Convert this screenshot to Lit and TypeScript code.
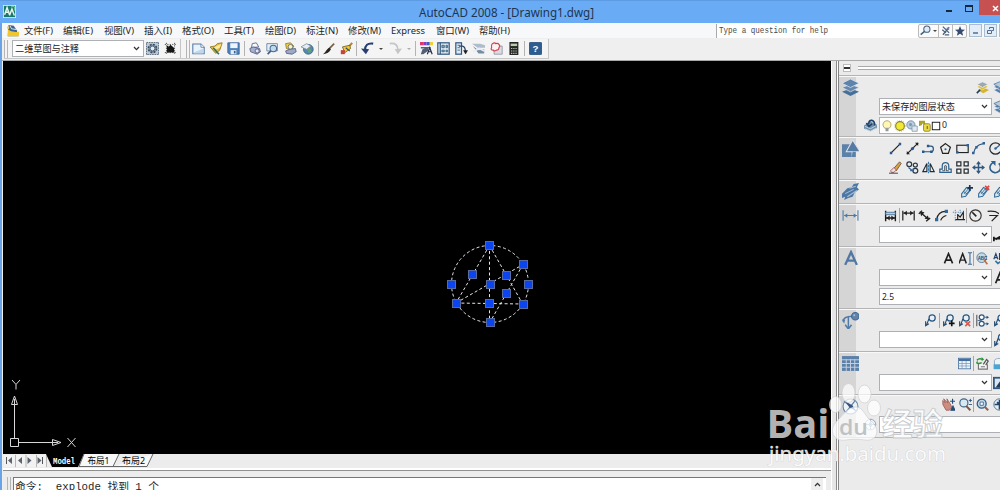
import { LitElement, html, css, svg, nothing } from "lit";
import { customElement, property } from "lit/decorators.js";

const glyphs: Record<string, unknown> = {
  app: svg`<rect width="16" height="16" fill="#e9f5f0"/><rect x="1" y="1" width="14" height="14" fill="#19796b"/><path d="M2 12L5 3l3 9M3 9h5M8 13l3-8 3 8" fill="none" stroke="#e8f6ee" stroke-width="1.8"/><path d="M10 2h4v5" fill="none" stroke="#7ed6a3"/>`,
  dwg: svg`<path d="M2 0l7 1 4 6 2 8H1z" fill="#3b6391"/><path d="M1 6q5 4 15 3v6H1z" fill="#f0c62e"/><path d="M0 2h3v3H0z" fill="#f3d24e"/><path d="M4 1l2 4 6 1" stroke="#e8ecf0" fill="none" stroke-width="1.2"/>`,
  gear: svg`<rect x=".5" y=".5" width="15" height="15" fill="#b9c7d4" stroke="#3d5268" stroke-dasharray="2 1"/><circle cx="8" cy="8" r="5" fill="#8fa5b8" stroke="#34495e" stroke-width="2" stroke-dasharray="2.4 1.5"/><circle cx="8" cy="8" r="3" fill="#e2eaf0" stroke="#34495e"/>`,
  home: svg`<path d="M1 3h14M1 13h14M3 1v14M13 1v14" stroke="#555" stroke-width="1.200" stroke-dasharray="1.500 1.500"/><path d="M3.500 8V4.500h2V6L8 3.500l4.500 4V13h-9z" fill="#161616"/>`,
  newf: svg`<path d="M1 2.5h10l4 4v8H1z" fill="#e9f3fc" stroke="#5679a4" stroke-width="1.3"/><path d="M11 2.5v4h4" fill="#fff" stroke="#5679a4"/><path d="M2 13l12-5v6H2z" fill="#bfd6ec"/>`,
  open: svg`<path d="M0 6l6-1 3-3 6-1-3 9-5 4z" fill="#e5bb3c" stroke="#8f7019"/><path d="M4 7l10-5-2 5-4 2z" fill="#fae99e"/><path d="M4 7l5 6 2 2" stroke="#386f5c" stroke-width="2"/>`,
  save: svg`<path d="M1 1h14v14H3l-2-2z" fill="#4f81ba" stroke="#355f94"/><rect x="4" y="1.5" width="9" height="6" fill="#eef4fb"/><rect x="4.5" y="10" width="7" height="5" fill="#e6edf5"/><rect x="8.5" y="11" width="2" height="3" fill="#355f94"/>`,
  print: svg`<path d="M3 7l1-5 5-1 3 5z" fill="#f7f9fc" stroke="#4c5a82"/><path d="M1 8l4-2 8 2 1 4-4 3-8-3z" fill="#a5b0cc" stroke="#4c5a82"/><circle cx="10" cy="11" r="2.5" fill="#e5e8f2" stroke="#4c5a82"/>`,
  preview: svg`<path d="M1 2h13v9H1z" fill="#e5eff8" stroke="#607c9d"/><circle cx="9" cy="8" r="4" fill="#bddbed" stroke="#49688d" stroke-width="1.3"/><path d="M6 11l-4 4" stroke="#3f5b80" stroke-width="2"/>`,
  publish: svg`<path d="M2 2l6-1 4 4-3 5-6-2z" fill="#f2d04d" stroke="#8d7321"/><circle cx="8" cy="6" r="3" fill="#fff2b7" stroke="#4f628c"/><path d="M2 11l5-2 7-1 1 4-5 3-7-1z" fill="#9da9c5" stroke="#4c5a82"/>`,
  globe: svg`<circle cx="9" cy="9" r="6" fill="#5488ac" stroke="#31617f"/><path d="M6 6l5 1 2 4-3 3-2-4z" fill="#63a074"/><path d="M0 6l7-4 5 3-5 4z" fill="#e8ecf2" stroke="#8191a7"/>`,
  brush: svg`<path d="M15 2L8 9" stroke="#795c44" stroke-width="2"/><path d="M9 7l2 2c-2 4-6 6-10 6 3-1 4-6 8-8z" fill="#282522"/>`,
  match: svg`<path d="M15 1L8 9" stroke="#af8240" stroke-width="2.5"/><path d="M3 6l9-2 1 4-7 5z" fill="#f2cb2e" stroke="#6b571f"/><path d="M1 10h5v5H1z" fill="#c54435"/><path d="M7 7l5 4" stroke="#30537b" stroke-width="1.5"/>`,
  undo: svg`<path d="M15 2C8 1 5 4 5 10" fill="none" stroke="#253f70" stroke-width="2.6"/><path d="M0 8l10 1-4 6z" fill="#253f70"/>`,
  redo: svg`<path d="M1 2c7-1 10 2 10 8" fill="none" stroke="#c4c6ca" stroke-width="2.2"/><path d="M7 9l9-1-5 7z" fill="#c4c6ca"/>`,
  props: svg`<path d="M0 0h4v4H0z" fill="#dc386a"/><path d="M4 0h4v4H4z" fill="#8b36c4"/><path d="M8 0h4v4H8z" fill="#3c58ce"/><path d="M12 0h4v4h-4z" fill="#ead339"/><path d="M1 6h12v2H1zM3 9l6-2 2 3-7 5H1z" fill="#506079"/><path d="M9 15l3-8 3 8M10 12h4" stroke="#222c46" fill="none" stroke-width="1.4"/>`,
  dc: svg`<rect x="1" y="1" width="14" height="14" fill="#e1edf4" stroke="#31577e" stroke-width="1.5"/><path d="M4 1v14" stroke="#31577e" stroke-width="1.500"/><path d="M6 4h3v3H6zM11 4h2v3h-2zM6 10h3v2H6zM11 10h2v2h-2z" fill="#83a8ba" stroke="#37617d"/>`,
  tool: svg`<rect x="1" y="1" width="7" height="14" fill="#dceaf4" stroke="#31577e" stroke-width="1.5"/><path d="M3 4h3M3 7h3M3 10h3" stroke="#31577e"/><path d="M5 5h4c3 0 4 3 4 9" stroke="#27466b" stroke-width="1.6" fill="none"/><path d="M10 10h6l-3 5z" fill="#222"/>`,
  sheet: svg`<path d="M0 2h10l6 2v3H7z" fill="#aebccb"/><path d="M1 5l7 5 7-1v5H8z" fill="#748da5"/><path d="M1 12l8-4 6 3" fill="none" stroke="#e7edf2" stroke-width="2"/>`,
  markup: svg`<path d="M5 5h10v10H5z" fill="#dbdce1" stroke="#8e929c"/><path d="M3 2q3-2 4 0 3-1 4 1 2 2 0 4 0 3-3 3-3 2-4 0-4 0-2-3-1-3 1-5z" fill="#fbf2f3" stroke="#d83c50" stroke-width="1.4"/>`,
  calc: svg`<rect x="3" y="0" width="11" height="16" fill="#252825"/><rect x="4.5" y="2" width="8" height="3" fill="#b9cdaa"/><path d="M5 8h7M5 11h7M5 14h7" stroke="#c4c7be" stroke-width="1.3" stroke-dasharray="1.5 1.2"/>`,
  help: svg`<rect x=".5" y=".5" width="15" height="15" rx="1" fill="#2c5d91" stroke="#1f4875"/><text x="8" y="12.500" text-anchor="middle" font-family="Liberation Sans" font-weight="bold" font-size="12" fill="#fff">?</text>`,
  search: svg`<circle cx="10" cy="6" r="4.5" fill="#e0ebf5" stroke="#426183" stroke-width="1.5"/><path d="M7 9l-6 5" stroke="#426183" stroke-width="2.2"/>`,
  sat: svg`<path d="M3 1l10 10M13 2L3 14M2 6l6 5M6 14h7" stroke="#4b5f7f" stroke-width="2"/><path d="M8 3l5-1v5z" fill="#6f839f"/>`,
  star: svg`<path d="M8 0l2.2 5.5 5.8.4-4.5 3.7L13 15.5 8 12.300l-5 3.200 1.500-5.900L0 5.900l5.800-.4z" fill="#354b70"/>`,
  layers: svg`<path d="M0 12l8-3 8 3-8 4z" fill="#486f97"/><path d="M0 8l8-3 8 3-8 4z" fill="#6588ac" stroke="#e1e4e8" stroke-width=".7"/><path d="M0 4l8-4 8 4-8 4z" fill="#5e84ad" stroke="#e1e4e8" stroke-width=".7"/>`,
  layY: svg`<path d="M2 11l7-3 7 3-7 4z" fill="#d4b330"/><path d="M1 7l7-3 7 3-7 4z" fill="#dfbd38" stroke="#fff" stroke-width=".5"/><path d="M1 4l7-3 7 3-7 4z" fill="#9ba9aa" stroke="#eef"/><path d="M1 15l4-4" stroke="#223e60" stroke-width="2"/>`,
  layB: svg`<path d="M1 11l7-3 7 3-7 4zM1 7l7-3 7 3-7 4z" fill="#527fa8" stroke="#eef" stroke-width=".7"/><path d="M1 4l7-3 7 3-7 4z" fill="#bacbd5" stroke="#527fa8"/>`,
  layP: svg`<path d="M0 8l8-5 8 4v4l-8 4-8-3z" fill="#6f91ad"/><path d="M1 12l7 3 7-4M1 9l7 3 7-4" fill="none" stroke="#d4dfe7"/><path d="M13 8c1-8-8-8-7-2M3 5l3 4 4-3" stroke="#223f65" fill="none" stroke-width="2"/>`,
  bulb: svg`<path d="M5 11C0 6 4 1 8 1s8 5 3 10z" fill="#fff7b8" stroke="#a38b42"/><path d="M6 11h4v4H6z" fill="#8a98a8"/>`,
  sun: svg`<circle cx="8" cy="8" r="5.800" fill="#f1e932" stroke="#88832a" stroke-width="1.500"/><circle cx="8" cy="8" r="7.500" fill="none" stroke="#b7a642" stroke-dasharray="1 2"/>`,
  vp: svg`<circle cx="6.500" cy="6.500" r="5.500" fill="#b9cddc" stroke="#5f7f99"/><circle cx="6" cy="6" r="2" fill="#7896b0"/><path d="M8 8h7v7H8z" fill="#e2e9ee" stroke="#7c93a7"/>`,
  lock: svg`<path d="M1 8V2h6v5M3 7V4h3" fill="none" stroke="#aba12e" stroke-width="2"/><rect x="6" y="5" width="9" height="10" rx="2" fill="#ead844" stroke="#7c741f"/><path d="M11 8v4" stroke="#746d20" stroke-width="1.500"/>`,
  box: svg`<rect x="2" y="2" width="12" height="12" fill="#fff" stroke="#151515" stroke-width="1.500"/>`,
  shapes: svg`<path d="M0 4h9v12H0z" fill="#5b81a9"/><path d="M10 0l7 11H4z" fill="#557ba4" stroke="#dfe2e6"/><path d="M10 11h3v5H9z" fill="#5b81a9"/>`,
  line: svg`<path d="M2 14L14 2" stroke="#222" stroke-width="1.500"/><path d="M1 12h3v3H1zM12 1h3v3h-3z" fill="#28588f"/>`,
  xline: svg`<path d="M1 15L15 1" stroke="#222" stroke-width="1.500"/><path d="M11 1h4v4zM1 11v4h4z" fill="#222"/><circle cx="8" cy="8" r="2" fill="#28588f"/>`,
  pline: svg`<path d="M2 12h9c4 0 4-7 0-7H8" fill="none" stroke="#2b5481" stroke-width="1.500"/><path d="M0 10.500h3v3H0zM6 3.500h3v3H6zM10 10.500h3v3h-3z" fill="#26588e"/>`,
  poly: svg`<path d="M8 2l6 4.500-2.500 7.500h-7L2 6.500z" fill="none" stroke="#222" stroke-width="1.500"/><circle cx="8" cy="9" r="1.300" fill="#2f6398"/>`,
  rect: svg`<rect x="1" y="4" width="14" height="9" fill="none" stroke="#222" stroke-width="1.400"/><path d="M0 11h3v3H0zM13 2.500h3v3h-3z" fill="#2f6398"/>`,
  arc: svg`<path d="M2 14C3 6 8 3 14 2" fill="none" stroke="#315a86" stroke-width="1.500"/><path d="M0 12h3v3H0zM4 5h3v3H4zM13 0h3v3h-3z" fill="#2f6398"/>`,
  circ: svg`<circle cx="8" cy="8" r="7" fill="none" stroke="#252d35" stroke-width="1.500"/><path d="M8 8l5-4" stroke="#2f6398" stroke-width="1.500"/><circle cx="8" cy="8" r="1.500" fill="#2f6398"/>`,
  erase: svg`<path d="M6 9l7-8 2 2-6 9z" fill="#d7a24b" stroke="#6b4e2e"/><path d="M2 12l4-4 3 3-3 3H3z" fill="#f0dcdc" stroke="#a04a50"/><path d="M0 15h11" stroke="#222"/>`,
  copy: svg`<circle cx="4" cy="4" r="3" fill="none" stroke="#2c3947" stroke-width="1.500"/><circle cx="11.500" cy="5" r="2.500" fill="none" stroke="#2c3947" stroke-width="1.500"/><circle cx="11.500" cy="12" r="3" fill="none" stroke="#2c3947" stroke-width="1.500"/><path d="M3 8l5 4M5 12h4V9" fill="none" stroke="#316494" stroke-width="1.500"/>`,
  mirror: svg`<path d="M8 1v14" stroke="#317ab0" stroke-width="1.300" stroke-dasharray="3 1"/><path d="M6 3v10H1zM10 3v10h5z" fill="none" stroke="#202c38" stroke-width="1.400"/>`,
  offset: svg`<path d="M1 14h14v-4h-3V6a4 4 0 0 0-8 0v4H1z" fill="none" stroke="#2b6390" stroke-width="1.500"/><path d="M4 12h3V6a1.500 1.500 0 0 1 2 0v6h3" fill="none" stroke="#273746"/>`,
  array: svg`<path d="M1 1h5v5H1zM10 1h5v5h-5zM1 10h5v5H1zM10 10h5v5h-5z" fill="#f5f5f5" stroke="#252b31" stroke-width="1.500"/>`,
  move: svg`<path d="M8 2v12M2 8h12" stroke="#31577e" stroke-width="1.800"/><path d="M8 0l3 4H5zM8 16l3-4H5zM0 8l4-3v6zM16 8l-4-3v6z" fill="#31577e"/>`,
  rotate: svg`<path d="M5 2a6.500 6.500 0 1 0 7 1" fill="none" stroke="#31608f" stroke-width="2"/><path d="M2 0h6v6z" fill="#31608f"/>`,
  ann: svg`<path d="M0 10l5-5 4-1 2-3 5-1-2 4 2 2-4 3-2 4-4 1-4 2 1-3-3 1z" fill="#4d77a4"/><path d="M3 10l8-4M5 13l9-6M7 5l6-2" stroke="#a9bfd4"/>`,
  ed: svg`<path d="M2 11L8 3l5 3-6 8-5 1z" fill="#d6e4ed" stroke="#326b98" stroke-width="1.300"/><path d="M5 11l5-6M7 12l5-6M4 8l5 3" stroke="#326b98"/>`,
  dim: svg`<path d="M1 3v10M15 3v10M2 8h12" stroke="#507aa4" fill="none"/><path d="M2 8l3-2v4zM14 8l-3-2v4z" fill="#507aa4"/>`,
  dimq: svg`<path d="M2 2v13M14 2v13M2 11h12" stroke="#1c1c1c" stroke-width="1.700"/><path d="M2 4h12v3H2z" fill="#b8cce0" stroke="#3c6793"/><path d="M3 11l4-3v6zM13 11l-4-3v6z" fill="#222"/>`,
  diml: svg`<path d="M1 2v12M15 2v12M2 5h12" stroke="#222" stroke-width="1.500"/><path d="M2 5l4-3v6zM14 5l-4-3v6z" fill="#222"/>`,
  dima: svg`<path d="M1 6l4-4M10 15l5-4M4 5l8 7" stroke="#222" stroke-width="1.700"/><path d="M2 3l6 1-4 5zM14 13l-6-1 4-4z" fill="#222"/>`,
  dimarc: svg`<path d="M2 13C3 7 7 3 13 3M7 14c1-3 3-5 7-6" fill="none" stroke="#222" stroke-width="1.500"/><path d="M0 11h4v4H0zM12 1h4v4h-4z" fill="#336998"/>`,
  dimo: svg`<path d="M4 13h12M7 6v7M7 7l3 3 4-6v9" stroke="#222" fill="none" stroke-width="1.400"/><path d="M1 4h13M4 1v14M10 1v5" stroke="#4179a4" stroke-dasharray="1.500 1.500"/>`,
  dimr: svg`<circle cx="8" cy="8" r="7" fill="none" stroke="#343434" stroke-width="1.400"/><path d="M9 9L4 4" stroke="#222" stroke-width="2"/>`,
  jog: svg`<path d="M2 3c8-1 11 0 14 3M4 8h10L7 15" stroke="#222" fill="none" stroke-width="1.500"/>`,
  update: svg`<path d="M1 10v5M2 12h10M3 13l10-6" stroke="#181818" stroke-width="2"/>`,
  A: svg`<path d="M3 14L8 2l5 12M5 10h6" fill="none" stroke="#202020" stroke-width="2"/>`,
  bigA: svg`<path d="M3 14L8.500 2 14 14M5 10h7" fill="none" stroke="#5178a2" stroke-width="2.200"/>`,
  AI: svg`<path d="M0 14L4.500 2 9 14M2 10h5" fill="none" stroke="#202020" stroke-width="1.800"/><path d="M11 1h5M11 15h5M13.500 1v14" stroke="#396996" stroke-width="1.300"/>`,
  find: svg`<circle cx="7" cy="7" r="6" fill="#c2d8e7" stroke="#4b7396"/><path d="M10 10l4 5" stroke="#bd7145" stroke-width="2"/><text x="2" y="9.500" font-size="6" textLength="12" lengthAdjust="spacingAndGlyphs" font-weight="bold" font-family="Liberation Sans" fill="#274f79">ABC</text>`,
  spell: svg`<path d="M1 9l2.500-7L6 9M2 7h3M8 2v7h3q2-2 0-4 1-3-1-3z" fill="none" stroke="#20446b" stroke-width="1.400"/><path d="M3 11l3 3 8-5" stroke="#3474a6" fill="none" stroke-width="2"/>`,
  leadBig: svg`<path d="M1 9C1 5 5 4 10 4M6 5v10M3 12l3 4 3-4" fill="none" stroke="#517ba7" stroke-width="1.400"/><path d="M0 7h3l-1 4z" fill="#517ba7"/><circle cx="12.500" cy="4" r="3.500" fill="#6284a9" stroke="#426892"/><circle cx="11.500" cy="3" r="1" fill="#a5bdd5"/>`,
  lead: svg`<circle cx="10" cy="5" r="3.800" fill="#e8eff5" stroke="#285783" stroke-width="1.500"/><path d="M6 6L3 14M2 9v5.500l4-2.500" fill="none" stroke="#254d73" stroke-width="1.400"/>`,
  leadm: svg`<path d="M1 1v14" stroke="#222"/><path d="M2 8h5M10 4h4M10 12h4" stroke="#315d87"/><circle cx="7" cy="4" r="3" fill="#fff" stroke="#2e5880" stroke-width="1.500"/><circle cx="7" cy="12" r="3" fill="#fff" stroke="#2e5880" stroke-width="1.500"/><path d="M13 2l3 2-3 2zM13 10l3 2-3 2z" fill="#244d75"/>`,
  table: svg`<rect x=".5" y="1.500" width="15" height="13" fill="#f1f6fb" stroke="#456f9e"/><path d="M1 2h14v3H1z" fill="#456f9e"/><path d="M1 8h14M1 11h14M5 5v10M10 5v10" stroke="#7d9fc3"/>`,
  tbig: svg`<rect y="1" width="16" height="14" fill="#5b81aa"/><path d="M0 4.500h16M0 8h16M0 11.500h16M4 4v11M8 4v11M12 4v11" stroke="#c7d2df" stroke-width=".9"/>`,
  link: svg`<path d="M3 8v7h11V9M6 12h5" fill="#f4f4f4" stroke="#757575" stroke-width="1.400"/><path d="M1 4q3-3 7-1M7 7q-4 2-6 0" stroke="#2b9438" stroke-width="1.700" fill="none"/><path d="M7 0v5l3-2zM2 4v5l-2-2z" fill="#2b9438"/><path d="M9 9l4-6 2 2-3 5" fill="none" stroke="#555" stroke-width="1.500"/>`,
  db: svg`<path d="M3 4c2-3 9-3 12 0v10H3z" fill="#edf3f7" stroke="#8aa1b4"/><path d="M2 9h14v6H2z" fill="#4ba4d2"/>`,
  style: svg`<rect x="1" y="2" width="16" height="12" fill="#d7e6f1" stroke="#31577e" stroke-width="2"/><path d="M3 13l5-7 5 7z" fill="#243b58"/>`,
  nav: svg`<circle cx="8" cy="8" r="7" fill="#edf2f7" stroke="#6484a6"/><path d="M2 3l11 9M12 3l-8 10" stroke="#6582a2" stroke-width="1.200"/><path d="M3 3l7 4 2 4-5-2z" fill="#36567d"/>`,
  pan: svg`<path d="M1 3l3 3-2-5 5 5-1-5 4 6 2 4-3 4H5L1 8z" fill="#ce8b80" stroke="#985e58"/><path d="M13 1v6M10 4h6M11 15l2.500-5 2.500 5z" stroke="#244c78" stroke-width="1.400" fill="#244c78"/>`,
  zoom: svg`<circle cx="6" cy="6" r="5" fill="#d5e8f3" stroke="#3e6584" stroke-width="1.400"/><path d="M9 10l5 5" stroke="#7b5545" stroke-width="2.500"/><path d="M12 3h4M14 1v4M12 8h4" stroke="#1e4a77"/>`,
  zwin: svg`<circle cx="7" cy="7" r="5.500" fill="#c3d9e8" stroke="#315d83" stroke-width="1.600"/><path d="M5 5h4v4H5z" fill="#fff" stroke="#345d82"/><path d="M11 11l4 4" stroke="#a35b4b" stroke-width="2.500"/>`,
  orbit: svg`<circle cx="8" cy="8" r="7" fill="#e3edf4" stroke="#436786"/><path d="M8 2v12M2 8h12M5 5l6 6" stroke="#20466c" stroke-width="2"/>`,
  compass: svg`<circle cx="8" cy="8" r="6.500" fill="#edf2f6" stroke="#7d97ae"/><path d="M8 2v12M2 8h12M8 5l2 3-2 3-2-3z" stroke="#7d97ae" fill="none"/>`,
};
glyphs.edp = svg`${glyphs.ed}<path d="M12 0v7M9 3.500h7" stroke="#173355" stroke-width="2"/>`;
glyphs.edx = svg`${glyphs.ed}<path d="M10 1l5 5M15 1l-5 5" stroke="#d74443" stroke-width="2"/>`;
glyphs.leadp = svg`${glyphs.lead}<path d="M12 8v7M8.500 11.500h7" stroke="#111" stroke-width="2"/>`;
glyphs.leadx = svg`${glyphs.lead}<path d="M9 9l6 6M15 9l-6 6" stroke="#d85b50" stroke-width="2"/>`;

const icon = (name: string, size = 13) =>
  html`<svg class="icon" width=${size} height=${size} viewBox="0 0 16 16">${glyphs[name]}</svg>`;

/* A run of text set to an exact measure. */
const label = (text: string, width: number, size: number, cls = "") => {
  const h = Math.ceil(size * 1.5);
  return html`<svg class="label ${cls}" width=${width} height=${h}><text x="0" y=${h * 0.73} font-size=${size} textLength=${width} lengthAdjust="spacingAndGlyphs">${text}</text></svg>`;
};

const chevron = () => html`<svg class="chev" width="7" height="5" viewBox="0 0 7 5"><path d="M1 1l2.500 2.600L6 1" fill="none" stroke="#333" stroke-width="1.300"/></svg>`;

@customElement("cad-combo")
class CadCombo extends LitElement {
  @property() text = "";
  @property({ type: Number }) measure = 0;
  @property({ type: Boolean }) open = false;
  static styles = css`
    :host { display: block; box-sizing: border-box; height: 17px; background: #fff; border: 1px solid #adb1b5; font-family: "Noto Sans", "Noto Sans CJK SC", sans-serif; }
    .in { height: 100%; display: flex; align-items: center; padding: 0 3px 0 2px; }
    svg { flex: none; }
    .label { overflow: visible; fill: #222; }
    .chev { margin-left: auto; }
  `;
  render() {
    return html`<div class="in">${this.text ? label(this.text, this.measure, 9.6) : nothing}<slot></slot>${this.open ? nothing : chevron()}</div>`;
  }
}

@customElement("cad-drawing")
class CadDrawing extends LitElement {
  static styles = css`
    :host { display: block; background: #000; overflow: hidden; }
    svg { display: block; }
    .dash { fill: none; stroke: #e6e6e6; stroke-width: 1; stroke-dasharray: 3 2.400; }
    .ucs { fill: none; stroke: #d8d8d8; stroke-width: 1; }
    .grip { fill: #0c45f0; stroke: #576b9d; }
  `;
  render() {
    const grips = [[489.500, 245.500], [523.500, 264.500], [472.500, 274.500], [506.500, 275.500], [451.500, 284.500], [490.500, 284.500], [528.500, 284.500], [506.500, 293.500], [456.500, 303.500], [489.500, 303.500], [523.500, 304.500], [490.500, 322.500]];
    return html`<svg width="828" height="394" viewBox="3 61 828 394">
      <g class="dash">
        <circle cx="490" cy="284" r="38.500"/>
        <path d="M489.500 245.500V322M489.500 245.500L456 303M489.500 245.500L523 304.500M456 303L523 304M456 303L523 264.500M523 264.500L490 322"/>
      </g>
      ${grips.map(([x, y]) => svg`<rect class="grip" x=${x - 4} y=${y - 4} width="8" height="8"/>`)}
      <g class="ucs">
        <path d="M10.500 438.500h8v8h-8zM14.500 438V405M18.500 442.500H53M11.500 404.500h6L14.500 396zM52.500 439.500v6L61 442.500zM14.500 404v-5M53 442.500h5M12 380l4 4.500 4-4.500M16 384.500v5M67.500 438l8 9M75.500 438l-8 9"/>
      </g>
    </svg>`;
  }
}

type Item = string | { name: string; size: number };

@customElement("app-root")
class AppRoot extends LitElement {
  static styles = css`
    :host { display: block; position: relative; width: 1000px; height: 490px; overflow: hidden; background: #efefef; font-family: "Noto Sans", "Noto Sans CJK SC", sans-serif; color: #222; }
    * { box-sizing: border-box; }
    svg { display: block; flex: none; }
    .label { overflow: visible; fill: #1f1f1f; }
    .title { height: 23px; background: #6aabf5; border-top: 1px solid #5c9be2; display: flex; align-items: flex-start; padding-left: 3px; }
    .title .icon { margin-top: 4px; }
    .title .name { margin: 3px 0 0 403px; }
    .title .name .label { fill: #1d3550; }
    .winbtn { display: flex; margin-left: auto; }
    .min { width: 6px; height: 2px; background: #16283c; margin: 9px 13px 0 0; }
    .max { width: 8px; height: 7px; border: 1px solid #16283c; border-top-width: 2px; margin: 4px 6px 0 0; }
    .close { width: 21px; height: 15px; background: #c75050; margin-top: -1px; padding: 5px 0 0 13px; }
    .frame { display: flex; height: 467px; }
    .edge { width: 2px; background: #6aa4e6; flex: none; }
    .inner { width: 998px; flex: none; }
    .menubar { height: 15px; display: flex; align-items: center; background: #f7f8f9; padding-left: 5px; overflow: hidden; }
    .menubar > * { flex: none; }
    .menu { display: flex; align-items: center; width: 486px; margin-left: 5px; justify-content: space-between; }
    .ask { margin-left: 206px; width: 202px; height: 14px; border-left: 1px solid #aaa; background: #fff; display: flex; align-items: center; padding-left: 2px; }
    .mono { font-family: "Liberation Mono", "Noto Sans CJK SC", monospace; }
    .ask .label { fill: #4a4a4a; }
    .helpset { display: flex; align-items: center; height: 14px; width: 49px; border: 1px solid #bbb; border-radius: 2px; padding: 0 1px; background: #fafafa; justify-content: space-between; }
    .tri { border: 2px solid transparent; border-top: 2px solid #444; border-bottom: 0; flex: none; }
    .helpset i { width: 1px; height: 12px; background: #bbb; flex: none; }
    .mdi { width: 13px; height: 13px; border: 1px solid #a9bdcf; background: #e2edf8; margin-left: 2px; display: flex; justify-content: center; align-items: center; }
    .toolbar { height: 23px; display: flex; align-items: center; border-bottom: 1px solid #a9a9a9; width: 998px; padding-left: 2px; }
    .bar { height: 20px; display: flex; align-items: center; border-right: 1px solid #c5c5c5; border-bottom: 1px solid #c8c8c8; background: #f4f4f4; }
    .first { width: 177px; }
    .second { width: 368px; padding-left: 5px; }
    .grip { width: 4px; height: 18px; border: solid #b5b5b5; border-width: 0 1px; flex: none; }
    .first cad-combo { width: 132px; margin: 0 0 0 4px; flex: none; }
    .cell { width: 17.500px; display: flex; justify-content: center; flex: none; }
    .bsep { width: 1px; height: 15px; background: #b4b4b4; margin: 0 1.400px; flex: none; }
    .second .dd { width: 10px; display: flex; justify-content: center; flex: none; }
    .pale { opacity: .4; }
    .main { display: flex; height: 429px; }
    .left { width: 829px; padding-left: 1px; flex: none; }
    cad-drawing { height: 393px; width: 828px; }
    .tabs { height: 16px; display: flex; background: #ececec; border-bottom: 2px solid #fff; }
    .cmdframe { height: 20px; border-top: 1px solid #8f8f8f; background: #ececec; padding: 6px 5px 0 4px; display: flex; gap: 2px; }
    .cmd { flex: 1; height: 16px; border: 1px solid #777; border-right: 0; background: #fff; display: flex; align-items: flex-start; padding: 0 3px 0 1px; }
    .up { width: 12px; height: 13px; margin-left: auto; background: #eee; display: flex; align-items: center; justify-content: center; }
    .split { width: 8px; flex: none; border: solid #858585; border-width: 0 1px 0 0; background: linear-gradient(90deg, #fff 0 1px, #e6e6e6 1px 5px, #8b8b8b 5px 6px, #fff 6px); }
    .dash { width: 161px; flex: none; background: #ebebeb; }
    .dhead { height: 14px; display: flex; align-items: center; padding-left: 4px; gap: 7px; }
    .collapse { width: 8px; height: 8px; border: 1px solid #bbb; display: flex; align-items: center; background: #fff; }
    .collapse i { display: block; height: 2px; width: 6px; background: #333; }
    .hline { width: 142px; height: 4px; border: solid #aaa; border-width: 1px 0; background: #fff; }
    .panel { display: flex; border-top: 1px solid #b4b4b4; box-shadow: inset 0 1px #f8f8f8; }
    .stripe { width: 17px; margin-top: 1px; background: #d5d5d5; padding: 2px 0 0 3px; flex: none; }
    .body { flex: 1; min-width: 0; }
    .row { display: flex; align-items: center; height: 19px; }
    .row .cell { width: 16.700px; }
    .sep { width: 1px; height: 15px; background: #a5a5a5; flex: none; }
    .field { display: flex; align-items: center; height: 17px; gap: 1px; padding-left: 23px; margin-top: 1px; }
    .field cad-combo { width: 113px; flex: none; }
    .field.lead { padding-left: 8px; gap: 2px; }
    .field cad-combo.wide { width: 126px; }
    .swatches { display: flex; align-items: center; gap: .5px; margin-left: -1px; }
    .h0 { height: 61px; } .h1 { height: 43px; } .h2 { height: 24px; } .h3 { height: 43px; } .h4 { height: 62px; } .h5 { height: 43px; } .h6 { height: 43px; } .h7 { height: 43px; }
    .h1 .row { padding-left: 31px; } .h1 .row:first-child { margin-top: 2px; }
    .gap { margin-top: 2px; }
    .end { border-top: 1px solid #b4b4b4; }
    .mark { position: absolute; left: 760px; top: 375px; pointer-events: none; }
  `;

  private menus: [string, number][] = [["文件(F)", 29], ["编辑(E)", 30], ["视图(V)", 30], ["插入(I)", 28], ["格式(O)", 32], ["工具(T)", 30], ["绘图(D)", 31], ["标注(N)", 32], ["修改(M)", 33], ["Express", 34], ["窗口(W)", 33], ["帮助(H)", 31]];

  private cell(item: Item) {
    if (item === "|") return html`<span class="sep"></span>`;
    return typeof item === "string" ? html`<span class="cell">${icon(item, 13)}</span>` : html`<span class="cell">${icon(item.name, item.size)}</span>`;
  }

  private tool(name: string) {
    if (name === "|") return html`<span class="bsep"></span>`;
    if (name === "v") return html`<span class="dd"><span class="tri"></span></span>`;
    if (name === "w") return html`<span class="dd pale"><span class="tri"></span></span>`;
    return html`<span class="cell">${icon(name)}</span>`;
  }

  private row(start: number, items: Item[]) {
    return html`<div class="row"><svg width=${start} height="1"></svg>${items.map((i) => this.cell(i))}</div>`;
  }

  private panel(cls: string, name: string, body: unknown) {
    return html`<section class="panel ${cls}"><div class="stripe">${icon(name, 17)}</div><div class="body">${body}</div></section>`;
  }

  private field(side: string) {
    return html`<div class="field"><cad-combo></cad-combo>${icon(side, 14)}</div>`;
  }

  private tabs() {
    return html`<svg width="170" height="14" viewBox="3 454 170 14">
      <path d="M4 455h43v12H4z" fill="#f2f2f2"/>
      <path d="M15.500 455v12M26 455v12M36.500 455v12M46.500 455v12" stroke="#b7b7b7"/>
      <path d="M6.500 457v7M42.500 457v7" stroke="#555"/>
      <path d="M12 457v7l-4-3.500zM22 457v7l-4-3.500zM27.500 457v7l4-3.500zM37.500 457v7l4-3.500z" fill="#5c6470"/>
      <path d="M46 454h38l-6 13H52z" fill="#000"/>
      <path d="M84 454l-5 12.500h34l6-12.500M113 466.500h34l6-12.500" fill="#f8f8f8" stroke="#666"/>
      <text x="53" y="464" textLength="22" lengthAdjust="spacingAndGlyphs" font-size="8.500" font-weight="bold" font-family="Liberation Mono" fill="#fff">Model</text>
      <text x="87.500" y="464.300" textLength="22" lengthAdjust="spacingAndGlyphs" font-size="9.500">布局1</text>
      <text x="122" y="464.300" textLength="23" lengthAdjust="spacingAndGlyphs" font-size="9.500">布局2</text>
    </svg>`;
  }

  private watermark() {
    return html`<svg class="mark" width="195" height="95" viewBox="760 375 195 95">
      <g fill="#fff" fill-opacity=".72" stroke="#c9cdd1" stroke-opacity=".8" stroke-width=".8">
        <ellipse cx="848.500" cy="393" rx="6.500" ry="9.500"/><ellipse cx="864.500" cy="394" rx="6.500" ry="9"/>
        <ellipse cx="835.500" cy="404.500" rx="6" ry="8"/><ellipse cx="874" cy="408" rx="6.500" ry="8"/>
        <path d="M856 407c7 0 9 9 15 14 11 9 5 21-6 19-6-1-14-1-19 0-13 2-18-10-9-19 7-7 11-14 19-14z"/>
      </g>
      <g font-family="Open Sans" font-weight="bold">
        <text x="766.500" y="438" font-size="39" textLength="63" lengthAdjust="spacingAndGlyphs" fill="#c5c5c5" fill-opacity=".93">Bai</text>
        <text x="839" y="435" font-size="22" font-weight="600" textLength="29" lengthAdjust="spacingAndGlyphs" fill="#bfc2c5">du</text>
      </g>
      <text x="882" y="435" font-size="31" font-weight="bold" font-family="Noto Sans CJK SC" textLength="61" lengthAdjust="spacingAndGlyphs" fill="#fff" fill-opacity=".85" stroke="#c8cbce" stroke-width=".9">经验</text>
      <text x="769" y="461" font-size="19" font-family="Noto Sans" textLength="177" lengthAdjust="spacingAndGlyphs" fill="#fff" fill-opacity=".85" stroke="#c4c7ca" stroke-width=".5" paint-order="stroke">jingyan.baidu.com</text>
    </svg>`;
  }

  render() {
    return html`
      <header class="title">${icon("app", 13)}<span class="name">${label("AutoCAD 2008 - [Drawing1.dwg]", 175, 11.8)}</span>
        <div class="winbtn"><span class="min"></span><span class="max"></span><span class="close"><svg width="7" height="7" viewBox="0 0 7 7"><path d="M1 1l5 5M6 1L1 6" stroke="#fff" stroke-width="1.500"/></svg></span></div>
      </header>
      <div class="frame"><div class="edge"></div><div class="inner">
        <nav class="menubar">${icon("dwg", 12)}
          <div class="menu">${this.menus.map(([t, w]) => label(t, w, 9.600))}</div>
          <div class="ask mono">${label("Type a question for help", 109, 8.4)}</div>
          <div class="helpset">${icon("search", 11)}<span class="tri"></span><i></i>${icon("sat", 10)}<i></i>${icon("star", 10)}</div>
          <span class="mdi"><svg width="7" height="7"><path d="M1 6h5" stroke="#526e93" stroke-width="1.500"/></svg></span>
          <span class="mdi"><svg width="7" height="7"><path d="M2.500 2V.5h4v3H5M.5 3.500h4v3h-4z" fill="none" stroke="#526e93"/></svg></span>
          <span class="mdi"></span>
        </nav>
        <div class="toolbar">
          <div class="bar first"><span class="grip"></span><cad-combo text="二维草图与注释" measure="64"></cad-combo>${["gear", "home"].map((n) => this.tool(n))}</div>
          <div class="bar second"><span class="grip"></span>${["newf", "open", "save", "|", "print", "preview", "publish", "globe", "|", "brush", "match", "|", "undo", "v", "redo", "w", "|", "props", "dc", "tool", "sheet", "markup", "calc", "|", "help"].map((n) => this.tool(n))}</div>
        </div>
        <div class="main">
          <div class="left">
            <cad-drawing></cad-drawing>
            <div class="tabs">${this.tabs()}</div>
            <div class="cmdframe"><span class="grip"></span><div class="cmd mono">${label("命令:\u00a0\u00a0explode 找到 1 个", 144, 10.6)}<span class="up"><svg width="7" height="5"><path d="M1 4l2.500-2.600L6 4" fill="none" stroke="#333" stroke-width="1.300"/></svg></span></div></div>
          </div>
          <div class="split"></div>
          <aside class="dash">
            <div class="dhead"><span class="collapse"><i></i></span><span class="hline"></span></div>
            ${this.panel("h0", "layers", html`
              <div class="gap">${this.row(118, ["layY", "layB"])}</div>
              <div class="field"><cad-combo text="未保存的图层状态" measure="73"></cad-combo>${icon("layB", 14)}</div>
              <div class="field lead gap">${icon("layP", 13)}<cad-combo class="wide" open><span class="swatches">${["bulb", "sun", "vp", "lock"].map((n) => icon(n, 12))}${icon("box", 10)}${label("0", 5, 8.6)}</span></cad-combo></div>`)}
            ${this.panel("h1", "shapes", html`
              <div class="row">${["line", "xline", "pline", "poly", "rect", "arc", "circ"].map((n) => this.cell(n))}</div>
              <div class="row">${["erase", "copy", "mirror", "offset", "array", "move", "rotate"].map((n) => this.cell(n))}</div>`)}
            ${this.panel("h2", "ann", html`<div class="gap">${this.row(102, ["edp", "edx", "ed"])}</div>`)}
            ${this.panel("h3", "dim", html`<div class="gap">${this.row(26, ["dimq", "|", "diml", "dima", "dimarc", "dimo", "|", "dimr", "jog"])}</div>${this.field("update")}`)}
            ${this.panel("h4", "bigA", html`<div class="gap">${this.row(84, ["A", "AI", "|", "find", "spell"])}</div>${this.field("A")}
              <div class="field gap"><cad-combo class="wide" open text="2.5" measure="12"></cad-combo></div>`)}
            ${this.panel("h5", "leadBig", html`<div class="gap">${this.row(66, ["lead", "|", "leadp", "leadx", "|", "leadm", "lead"])}</div>${this.field("lead")}`)}
            ${this.panel("h6", "tbig", html`<div class="gap">${this.row(100, ["table", "|", "link", "db"])}</div>${this.field("style")}`)}
            ${this.panel("h7", "nav", html`<div>${this.row(84, ["pan", "zoom", "|", "zwin", "orbit"])}</div>
              <div class="field lead gap">${icon("compass", 13)}<cad-combo class="wide" open></cad-combo></div>`)}
            <div class="end"></div>
          </aside>
        </div>
      </div></div>
      ${this.watermark()}`;
  }
}
